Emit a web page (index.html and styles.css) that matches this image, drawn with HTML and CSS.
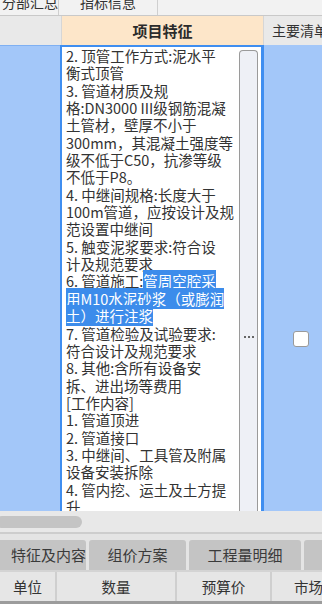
FILE: index.html
```html
<!DOCTYPE html>
<html lang="zh-CN">
<head>
    <meta charset="UTF-8">
    <meta name="viewport" content="width=device-width, initial-scale=1.0">
    <title>项目特征</title>
    <link rel="stylesheet" href="styles.css">
</head>
<body>
    <div class="top-tabs">
        <div class="top-tab first">分部汇总</div>
        <div class="top-tab">指标信息</div>
    </div>

    <div class="grid-head">
        <div class="hd-blank"></div>
        <div class="hd-feature">项目特征</div>
        <div class="hd-main">主要清单</div>
    </div>

    <div class="grid-row">
        <div class="row-left"></div>
        <div class="editor">
            <div class="editor-text">
                <div class="ln">2. 顶管工作方式:泥水平</div>
                <div class="ln">衡式顶管</div>
                <div class="ln">3. 管道材质及规</div>
                <div class="ln">格:DN3000 III级钢筋混凝</div>
                <div class="ln">土管材，壁厚不小于</div>
                <div class="ln">300mm，其混凝土强度等</div>
                <div class="ln">级不低于C50，抗渗等级</div>
                <div class="ln">不低于P8。</div>
                <div class="ln">4. 中继间规格:长度大于</div>
                <div class="ln">100m管道，应按设计及规</div>
                <div class="ln">范设置中继间</div>
                <div class="ln">5. 触变泥浆要求:符合设</div>
                <div class="ln">计及规范要求</div>
                <div class="ln">6. 管道施工:<span class="sel">管周空腔采</span></div>
                <div class="ln"><span class="sel">用M10水泥砂浆（或膨润</span></div>
                <div class="ln"><span class="sel">土）进行注浆</span></div>
                <div class="ln">7. 管道检验及试验要求:</div>
                <div class="ln">符合设计及规范要求</div>
                <div class="ln">8. 其他:含所有设备安</div>
                <div class="ln">拆、进出场等费用</div>
                <div class="ln">[工作内容]</div>
                <div class="ln">1. 管道顶进</div>
                <div class="ln">2. 管道接口</div>
                <div class="ln">3. 中继间、工具管及附属</div>
                <div class="ln">设备安装拆除</div>
                <div class="ln">4. 管内挖、运土及土方提</div>
                <div class="ln">升</div>
            </div>
            <div class="editor-btn">
                <span class="dot"></span><span class="dot"></span><span class="dot"></span>
            </div>
        </div>
        <div class="row-right">
            <div class="check"></div>
        </div>
    </div>

    <div class="hscroll">
        <div class="hscroll-thumb"></div>
    </div>

    <div class="bottom-tabs">
        <div class="btab w1">特征及内容</div>
        <div class="btab w2">组价方案</div>
        <div class="btab w3">工程量明细</div>
        <div class="btab w4"></div>
    </div>

    <div class="bottom-head">
        <div class="bh c1">单位</div>
        <div class="bh c2">数量</div>
        <div class="bh c3">预算价</div>
        <div class="bh c4">市场价</div>
    </div>
</body>
</html>
```

FILE: styles.css
```css
body {
    margin: 0;
    width: 322px;
    height: 604px;
    overflow: hidden;
    background: #6e6e6e;
    font-family: "Noto Sans CJK SC", "Liberation Sans", sans-serif;
    color: #333;
}

/* top tab strip, mostly scrolled out of view */
.top-tabs {
    display: flex;
    height: 15px;
    background: #f2f2f2;
    border-bottom: 1px solid #c9c9c9;
    overflow: hidden;
}

.top-tab {
    width: 98px;
    border-right: 1px solid #cfcfcf;
    text-align: center;
    font-size: 14px;
    line-height: 14px;
    margin-top: -5px;
    color: #333;
}

.top-tab.first {
    width: 58px;
    text-align: right;
}

.grid-head {
    display: flex;
    height: 29px;
    background: #e9e9e9;
}

.hd-blank {
    width: 61px;
}

.hd-feature {
    width: 201px;
    background: #fde6c9;
    border-left: 1px solid #d6d6d6;
    border-right: 1px solid #d6d6d6;
    text-align: center;
    font-size: 15px;
    font-weight: bold;
    line-height: 29px;
    color: #2b2b2b;
}

.hd-main {
    flex: 1;
    padding-left: 8px;
    font-size: 14px;
    line-height: 29px;
    white-space: nowrap;
    overflow: hidden;
}

.grid-row {
    display: flex;
    height: 466px;
    background: #a3c7f9;
}

.row-left {
    width: 60px;
    border-top: 1px solid #7fb0f2;
}

.editor {
    width: 199px;
    display: flex;
    background: #fff;
    border: 2px solid #3f8ef0;
    border-bottom: none;
}

.editor-text {
    flex: 1;
    padding-left: 4px;
    overflow: hidden;
    font-size: 14.5px;
    line-height: 17.35px;
    color: #333;
}

.ln {
    white-space: nowrap;
    height: 17.35px;
}

.sel {
    background: #3c8ceb;
    color: #fff;
}

.editor-btn {
    width: 19px;
    margin: 3px 3px 0 2px;
    background: #eef0f6;
    border: 1px solid #9a9a9a;
    border-bottom: none;
    border-radius: 4px 4px 0 0;
    display: flex;
    align-items: center;
    justify-content: center;
    gap: 2px;
    padding-top: 112px;
    box-sizing: border-box;
}

.dot {
    width: 2px;
    height: 2px;
    background: #666;
}

.row-right {
    flex: 1;
    border-left: 1px solid #3f8ef0;
    display: flex;
    align-items: center;
    justify-content: center;
    padding-top: 122px;
    padding-left: 15px;
}

.check {
    width: 14px;
    height: 14px;
    background: #fff;
    border: 1px solid #9a9a9a;
    border-radius: 3px;
}

.hscroll {
    background: #e8e8e8;
    border-bottom: 2px solid #cdcdcd;
    padding-top: 5px;
    box-sizing: border-box;
    height: 23px;
}

.hscroll-thumb {
    width: 86px;
    height: 12px;
    margin-left: -4px;
    background: #c4c4c4;
    border-radius: 6px;
}

.bottom-tabs {
    display: flex;
    height: 36px;
    background: #e4e4e4;
    padding-top: 6px;
    box-sizing: border-box;
    gap: 3px;
    overflow: hidden;
}

.btab {
    flex: none;
    background: #c4c4c4;
    border-radius: 3px 3px 0 0;
    text-align: center;
    font-size: 15px;
    line-height: 30px;
    color: #3a3a3a;
    white-space: nowrap;
    overflow: hidden;
}

.btab.w1 { width: 86px; text-align: right; direction: rtl; border-radius: 0 3px 0 0; }
.btab.w2 { width: 97px; }
.btab.w3 { width: 112px; }
.btab.w4 { width: 40px; }

.bottom-head {
    display: flex;
    height: 29px;
    background: #e6e6e6;
    border-top: 2px solid #d4d4d4;
    border-bottom: 3px solid #9c9c9c;
    overflow: hidden;
}

.bh {
    flex: none;
    text-align: center;
    font-size: 14.5px;
    line-height: 29px;
    border-right: 2px solid #cfcfcf;
    white-space: nowrap;
    color: #333;
}

.bh.c1 { width: 55px; }
.bh.c2 { width: 118px; }
.bh.c3 { width: 93px; }
.bh.c4 { width: 80px; text-align: left; padding-left: 22px; }
```
